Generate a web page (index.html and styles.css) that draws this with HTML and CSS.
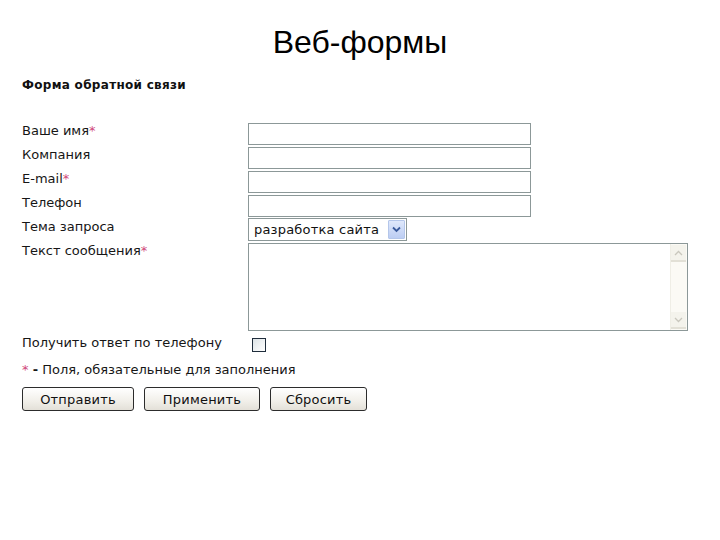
FILE: index.html
```html
<!DOCTYPE html>
<html lang="ru">
<head>
<meta charset="utf-8">
<title>Веб-формы</title>
<link rel="stylesheet" href="styles.css">
</head>
<body>
<div class="page">
  <h1 class="title">Веб-формы</h1>
  <h2 class="form-title">Форма обратной связи</h2>
  <form class="form">
    <div class="grid">
      <label class="label">Ваше имя<span class="req">*</span></label>
      <input class="input" type="text">
      <label class="label">Компания</label>
      <input class="input" type="text">
      <label class="label">E-mail<span class="req">*</span></label>
      <input class="input" type="text">
      <label class="label">Телефон</label>
      <input class="input" type="text">
      <label class="label">Тема запроса</label>
      <div class="select">
        <span class="select-text">разработка сайта</span>
        <span class="select-btn">
          <svg width="9" height="7" viewBox="0 0 9 7"><path d="M1 1.5 L4.5 5 L8 1.5" fill="none" stroke="#3a5a9c" stroke-width="1.8"/></svg>
        </span>
      </div>
      <label class="label">Текст сообщения<span class="req">*</span></label>
      <div class="textarea">
        <div class="textarea-body"></div>
        <div class="scrollbar">
          <span class="sb-btn">
            <svg width="9" height="6" viewBox="0 0 9 6"><path d="M1 5 L4.5 1.5 L8 5" fill="none" stroke="#c9c7bd" stroke-width="1.3"/></svg>
          </span>
          <span class="sb-track"></span>
          <span class="sb-btn">
            <svg width="9" height="6" viewBox="0 0 9 6"><path d="M1 1 L4.5 4.5 L8 1" fill="none" stroke="#c9c7bd" stroke-width="1.3"/></svg>
          </span>
        </div>
      </div>
    </div>
    <div class="check-row">
      <span class="label check-label">Получить ответ по телефону</span>
      <span class="checkbox"></span>
    </div>
    <p class="note"><span class="req">*</span> <b>-</b> Поля, обязательные для заполнения</p>
    <div class="buttons">
      <button type="button" class="btn btn-send">Отправить</button>
      <button type="button" class="btn btn-apply">Применить</button>
      <button type="button" class="btn btn-reset">Сбросить</button>
    </div>
  </form>
</div>
</body>
</html>
```
FILE: styles.css
```css
html, body {
  margin: 0;
  padding: 0;
  background: #ffffff;
}
.page {
  width: 720px;
  height: 540px;
  box-sizing: border-box;
  padding: 22px 0 0 22px;
  font-family: "DejaVu Sans", Verdana, sans-serif;
  color: #151515;
}
.title {
  margin: 0 0 0 -22px;
  font-family: "Liberation Sans", Arial, sans-serif;
  font-weight: normal;
  font-size: 32px;
  line-height: 40px;
  text-align: center;
  color: #000;
}
.form-title {
  margin: 16px 0 0 0;
  font-size: 12px;
  line-height: 14px;
  font-weight: bold;
  letter-spacing: 0.3px;
  color: #111;
}
.form {
  margin: 31px 0 0 0;
}
.grid {
  display: grid;
  grid-template-columns: 226px auto;
  row-gap: 2px;
  align-items: start;
}
.label {
  font-size: 13px;
  line-height: 15px;
  color: #161616;
}
.req {
  color: #d0487a;
}
.input {
  width: 283px;
  height: 22px;
  box-sizing: border-box;
  margin: 0;
  border: 1px solid #8c9898;
  background: #fff;
  padding: 0;
}
.select {
  width: 159px;
  height: 23px;
  box-sizing: border-box;
  border: 1px solid #8c9898;
  display: flex;
  align-items: center;
  justify-content: space-between;
  padding: 0 1px 0 5px;
  margin-top: -1px;
}
.select-text {
  font-size: 13px;
  letter-spacing: 0.2px;
  color: #111;
}
.select-btn {
  width: 17px;
  height: 19px;
  box-sizing: border-box;
  border: 1px solid #b4c6ea;
  border-radius: 1px;
  background: linear-gradient(#dfe8fb, #bccdf3);
  display: flex;
  align-items: center;
  justify-content: center;
}
.textarea {
  width: 440px;
  height: 88px;
  box-sizing: border-box;
  border: 1px solid #8c9898;
  display: flex;
  margin-top: 0;
}
.textarea-body {
  flex: 1;
}
.scrollbar {
  width: 17px;
  background: #fbfaf5;
  border-left: 1px solid #efeee6;
  display: flex;
  flex-direction: column;
  padding: 1px 1px 1px 0;
  box-sizing: border-box;
}
.sb-btn {
  height: 17px;
  display: flex;
  align-items: center;
  justify-content: center;
  background: #f4f3ec;
  border-bottom: 2px solid #e2e0d6;
  box-sizing: border-box;
}
.sb-track {
  flex: 1;
}
.check-row {
  display: grid;
  grid-template-columns: 230px auto;
  margin-top: 3px;
  align-items: start;
}
.check-label {
  padding-top: 1px;
}
.checkbox {
  width: 14px;
  height: 14px;
  box-sizing: border-box;
  border: 1px solid #1f2d3c;
  background: linear-gradient(135deg, #dce3e6, #ffffff);
  margin-top: 4px;
}
.note {
  margin: 10px 0 0 0;
  font-size: 13px;
  line-height: 15px;
  color: #161616;
}
.buttons {
  display: flex;
  gap: 10px;
  margin-top: 10px;
}
.btn {
  height: 24px;
  box-sizing: border-box;
  border: 1px solid #2c2c2c;
  border-radius: 3px;
  background: linear-gradient(#ffffff, #f1efe9 60%, #e3e0d8);
  font-family: "DejaVu Sans", Verdana, sans-serif;
  font-size: 13px;
  letter-spacing: 0.2px;
  color: #111;
  padding: 0;
  margin: 0;
}
.btn-send { width: 112px; }
.btn-apply { width: 116px; }
.btn-reset { width: 97px; }
```
